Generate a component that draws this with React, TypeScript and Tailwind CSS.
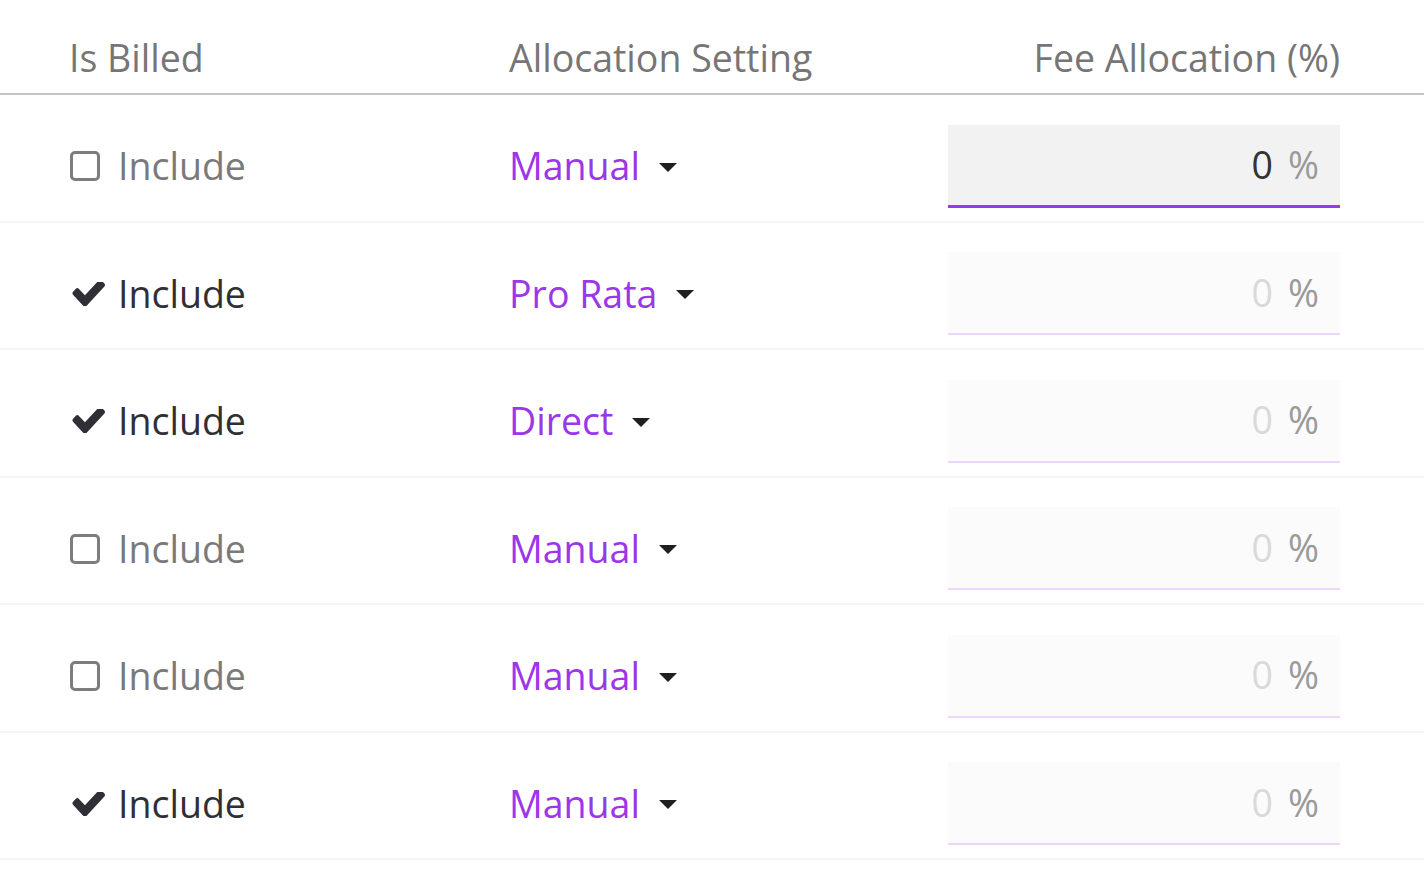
import React from "react";

type Row = { billed: boolean; setting: string; focused?: boolean };

const rows: Row[] = [
  { billed: false, setting: "Manual", focused: true },
  { billed: true, setting: "Pro Rata" },
  { billed: true, setting: "Direct" },
  { billed: false, setting: "Manual" },
  { billed: false, setting: "Manual" },
  { billed: true, setting: "Manual" },
];

function Check() {
  return (
    <svg
      viewBox="100 430 1571 1060"
      width="33"
      height="24"
      preserveAspectRatio="none"
      className="ml-[3px] text-[#2f2f35]"
    >
      <path
        fill="currentColor"
        d="M1671 566q0 40-28 68l-724 724-136 136q-28 28-68 28t-68-28l-136-136-362-362q-28-28-28-68t28-68l136-136q28-28 68-28t68 28l294 295 656-657q28-28 68-28t68 28l136 136q28 28 28 68z"
      />
    </svg>
  );
}

export default function App() {
  return (
    <div
      className="w-[1424px] min-h-[890px] bg-white"
      style={{ fontFamily: '"Open Sans", "Noto Sans", sans-serif' }}
    >
      <div className="flex h-[95px] items-end border-b-2 border-[#c6c6c6] pb-[10px] pl-[69px] pr-[84px] text-[37.5px] leading-[50px] text-[#767676]">
        <div className="w-[440px]">Is Billed</div>
        <div className="w-[439px]">Allocation Setting</div>
        <div className="flex-1 text-right">Fee Allocation (%)</div>
      </div>
      {rows.map((r, i) => (
        <div
          key={i}
          className="flex h-[127.5px] items-center border-b-2 border-[#f5f5f5] pl-[69px] pr-[84px] pt-[17px]"
        >
          <div className="flex w-[440px] items-center">
            <div className="flex w-[49px] items-center">
              {r.billed ? (
                <Check />
              ) : (
                <div className="ml-px h-[30px] w-[30px] rounded-[5px] border-[3px] border-[#7d7d7d]" />
              )}
            </div>
            <span
              className={
                "text-[37.5px] leading-[50px] " +
                (r.billed ? "text-[#2f2f35]" : "text-[#7a7a7a]")
              }
            >
              Include
            </span>
          </div>
          <div className="flex w-[439px] items-center">
            <span className="text-[37.5px] leading-[50px] text-[#9b36e9]">
              {r.setting}
            </span>
            <span className="ml-[19px] mt-[2px] h-0 w-0 border-l-[9.5px] border-r-[9.5px] border-t-[9px] border-l-transparent border-r-transparent border-t-[#1f1f1f]" />
          </div>
          <div
            className={
              "flex h-[83px] flex-1 items-center justify-end pr-[21px] text-[37.5px] leading-[50px] " +
              (r.focused
                ? "border-b-[3px] border-[#9b36e9] bg-[#f2f2f2]"
                : "border-b-2 border-[#edd6fb] bg-[#fbfbfb]")
            }
          >
            <span className={r.focused ? "text-[#333333]" : "text-[#d9d9d9]"}>0</span>
            <span className="ml-[15px] text-[#9a9a9a]">%</span>
          </div>
        </div>
      ))}
    </div>
  );
}
